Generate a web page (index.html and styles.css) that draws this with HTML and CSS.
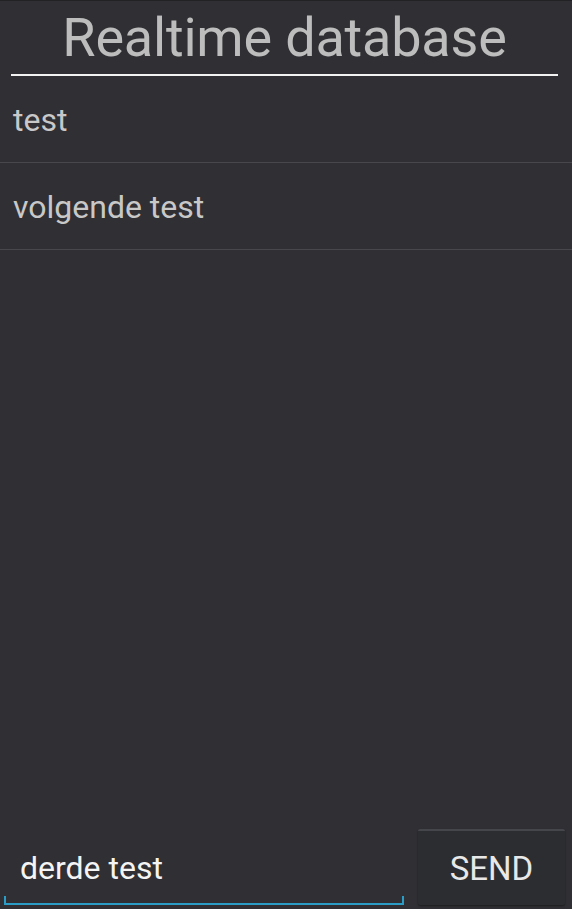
FILE: index.html
```html
<!DOCTYPE html>
<html>
<head>
<meta charset="utf-8">
<link rel="stylesheet" href="styles.css">
</head>
<body>
<div class="app">
  <header class="title-bar">
    <h1 class="title">Realtime database</h1>
  </header>
  <ul class="list">
    <li class="item">test</li>
    <li class="item">volgende test</li>
  </ul>
  <div class="composer">
    <div class="field">
      <span class="field-text">derde test</span>
    </div>
    <button class="send">SEND</button>
  </div>
</div>
</body>
</html>
```
FILE: styles.css
```css
html, body {
  margin: 0;
  padding: 0;
  height: 100%;
}
body {
  background: #302f33;
  font-family: Roboto, "Noto Sans", sans-serif;
}
.app {
  height: 909px;
  display: flex;
  flex-direction: column;
  border-top: 1px solid #222224;
  box-sizing: border-box;
}
.title-bar {
  padding: 0 14px 0 11px;
}
.title {
  margin: 0;
  height: 75px;
  box-sizing: border-box;
  border-bottom: 2px solid #f2f2f2;
  text-align: center;
  font-weight: 400;
  font-size: 54px;
  line-height: 74px;
  letter-spacing: -0.2px;
  color: #bdbdbd;
  overflow: hidden;
}
.list {
  list-style: none;
  margin: 0;
  padding: 0;
  flex: 1;
}
.item {
  height: 87px;
  box-sizing: border-box;
  border-bottom: 1px solid #48474b;
  padding-left: 13px;
  font-size: 32px;
  line-height: 88px;
  color: #c8c8c8;
}
.composer {
  display: flex;
  align-items: flex-end;
  gap: 14px;
  padding: 0 7px 4px 4px;
}
.field {
  width: 400px;
  height: 72px;
  box-sizing: border-box;
  border-bottom: 2px solid #2a9cc6;
  border-left: 2px solid #2a9cc6;
  border-right: 2px solid #2a9cc6;
  border-image: linear-gradient(to bottom, transparent 0, transparent 64px, #2a9cc6 64px) 1;
  padding-left: 14px;
  display: flex;
  align-items: center;
}
.field-text {
  font-size: 32px;
  color: #f4f4f4;
}
.send {
  width: 147px;
  height: 76px;
  margin-bottom: 0;
  background: #2c2d31;
  border: none;
  border-top: 2px solid #44464b;
  border-radius: 2px;
  box-shadow: 0 1px 2px rgba(0,0,0,0.4);
  font-family: Roboto, "Noto Sans", sans-serif;
  font-size: 33px;
  color: #e8e8e8;
  padding: 0;
}
```
